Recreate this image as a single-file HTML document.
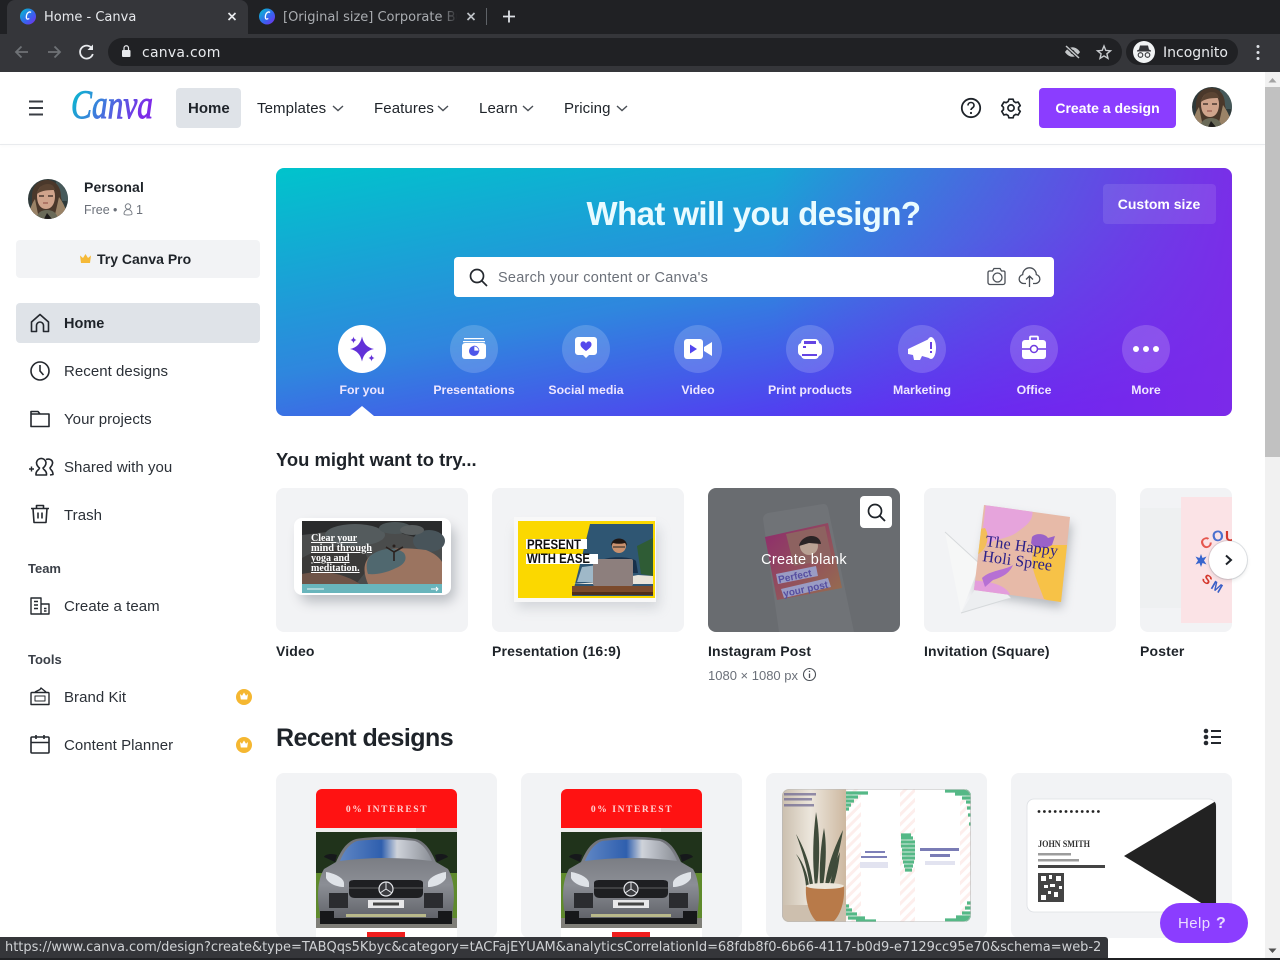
<!DOCTYPE html>
<html lang="en"><head><meta charset="utf-8"><title>Home - Canva</title>
<style>
*{box-sizing:border-box}
html,body{margin:0;padding:0;width:1280px;height:960px;overflow:hidden;background:#fff;font-family:"Liberation Sans",sans-serif;color:#1e2329}
.a{position:absolute}
.t{position:absolute;white-space:nowrap;line-height:20px;height:20px;margin-top:1px}
.b{font-weight:700}
.c{transform:translateX(-50%)}
svg{position:absolute;overflow:visible;display:block}
.chrome{font-family:"DejaVu Sans","Liberation Sans",sans-serif}
.nav{font-size:15px;color:#1e2329;letter-spacing:.1px}
.side{font-size:15px;color:#2b3037;letter-spacing:.05px}
.lab{font-size:13px;font-weight:700;color:#3b4048}
.cap{font-size:14px;font-weight:700;color:#1e2329;letter-spacing:.15px}
.hl{font-size:12.3px;font-weight:700;color:#eee6ff;top:379px}
.hc{position:absolute;width:48px;height:48px;border-radius:50%;background:rgba(255,255,255,.17);top:325px}
.card{position:absolute;top:488px;height:144px;width:192px;background:#f2f3f5;border-radius:8px;overflow:hidden}
.rc{position:absolute;top:773px;height:165px;width:221px;background:#f2f3f5;border-radius:8px;overflow:hidden}
</style></head><body>

<!-- browser chrome -->
<div class="a" style="left:0;top:0;width:1280px;height:34px;background:#202124"></div>
<div class="a" style="left:0;top:34px;width:1280px;height:38px;background:#35363a"></div>
<div class="a" style="left:7px;top:0;width:241px;height:34px;background:#35363a;border-radius:8px 8px 0 0"></div>
<svg style="left:0;top:0" width="1280" height="72" viewBox="0 0 1280 72">
 <defs><linearGradient id="fav" x1="0" y1="0" x2="1" y2="1"><stop offset="0" stop-color="#00c4cc"/><stop offset=".6" stop-color="#3b5ff0"/><stop offset="1" stop-color="#7d2ae8"/></linearGradient></defs>
 <circle cx="28" cy="16.500" r="8" fill="url(#fav)"/><path d="M31 12.500c-1.200-1.200-3.800-.4-4.500 3-.6 3 .4 4.500 2.800 3" fill="none" stroke="#fff" stroke-width="1.300"/>
 <circle cx="267" cy="16.500" r="8" fill="url(#fav)"/><path d="M270 12.500c-1.200-1.200-3.800-.4-4.500 3-.6 3 .4 4.500 2.800 3" fill="none" stroke="#fff" stroke-width="1.300"/>
 <path d="M228.500 13l7 7M235.500 13l-7 7" stroke="#e8eaed" stroke-width="1.700"/>
 <path d="M467.500 13l7 7M474.500 13l-7 7" stroke="#bdc1c6" stroke-width="1.700"/>
 <path d="M486.500 8v17" stroke="#5f6368" stroke-width="1"/>
 <path d="M509 10.500v12M503 16.500h12" stroke="#dee1e6" stroke-width="1.800"/>
 <path d="M28 52H16M21.500 46.500L16 52l5.500 5.500" fill="none" stroke="#6f7276" stroke-width="1.800"/>
 <path d="M48 52h12M54.500 46.500L60 52l-5.500 5.500" fill="none" stroke="#6f7276" stroke-width="1.800"/>
 <path d="M92 48.500A6.500 6.500 0 1 0 92.800 54" fill="none" stroke="#e8eaed" stroke-width="1.800"/><path d="M93 44.500v5.500h-5.500z" fill="#e8eaed"/>
 <rect x="108" y="38" width="1014" height="28" rx="14" fill="#202124"/>
 <rect x="122" y="50" width="8.500" height="7" rx="1" fill="#e8eaed"/><path d="M124 50v-2a2.200 2.200 0 0 1 4.500 0v2" fill="none" stroke="#e8eaed" stroke-width="1.200"/>
 <path d="M1065 52s2.800-4.800 7.500-4.800 7.500 4.800 7.500 4.800-2.800 4.800-7.500 4.800-7.500-4.800-7.500-4.800z" fill="#c4c7c9"/><circle cx="1072.500" cy="52" r="2" fill="#202124"/><path d="M1066 46l13 12" stroke="#202124" stroke-width="3.500"/><path d="M1066 46l13 12" stroke="#c4c7c9" stroke-width="1.500"/>
 <path d="M1104 46l1.800 4.400 4.700.4-3.600 3 1.100 4.600-4-2.500-4 2.500 1.100-4.600-3.600-3 4.700-.4z" fill="none" stroke="#c8cbce" stroke-width="1.400"/>
 <rect x="1126" y="39" width="112" height="26" rx="13" fill="#202124"/>
 <circle cx="1144" cy="52" r="11" fill="#f1f3f4"/><path d="M1137 51.500h14v-1l-2-1-1-4h-8l-1 4-2 1z" fill="#35363a"/><circle cx="1140.500" cy="55" r="2.300" fill="none" stroke="#35363a" stroke-width="1.100"/><circle cx="1147.500" cy="55" r="2.300" fill="none" stroke="#35363a" stroke-width="1.100"/>
 <circle cx="1258" cy="46.500" r="1.500" fill="#dee1e6"/><circle cx="1258" cy="52.500" r="1.500" fill="#dee1e6"/><circle cx="1258" cy="58.500" r="1.500" fill="#dee1e6"/>
</svg>
<div class="t chrome" style="left:44px;top:7px;font-size:13px;color:#e8eaed">Home - Canva</div>
<div class="a" style="left:283px;top:7px;width:174px;height:21px;overflow:hidden"><div class="t chrome" style="left:0;top:0;font-size:13px;color:#a9acb0">[Original size] Corporate Business</div></div>
<div class="a" style="left:440px;top:4px;width:18px;height:24px;background:linear-gradient(90deg,rgba(32,33,36,0),#202124)"></div>
<div class="t chrome" style="left:142px;top:42px;font-size:14px;letter-spacing:.25px;color:#e8eaed">canva.com</div>
<div class="t chrome" style="left:1163px;top:42px;font-size:14px;color:#e8eaed">Incognito</div>

<!-- top header -->
<div class="a" style="left:0;top:144px;width:1265px;height:1px;background:#e9ebee;box-shadow:0 1px 2px rgba(0,0,0,.04)"></div>
<svg style="left:0;top:72px" width="260" height="72" viewBox="0 0 260 72">
 <defs><linearGradient id="logo" x1="0" y1="0" x2="1" y2=".3"><stop offset="0" stop-color="#00c4cc"/><stop offset=".45" stop-color="#3b7fdc"/><stop offset="1" stop-color="#7d2ae8"/></linearGradient></defs>
 <path d="M29 29.500h14M29 36h14M29 42.500h14" stroke="#3a3e44" stroke-width="2"/>
 <text x="71" y="46" font-family="Liberation Serif" font-style="italic" font-size="40" textLength="82" lengthAdjust="spacingAndGlyphs" fill="url(#logo)" stroke="url(#logo)" stroke-width=".9">Canva</text>
</svg>
<div class="a" style="left:176px;top:88px;width:65px;height:40px;background:#dfe3e8;border-radius:4px"></div>
<div class="t b" style="left:188px;top:98px;font-size:15px;color:#1e2329">Home</div>
<div class="t nav" style="left:257px;top:98px">Templates</div>
<div class="t nav" style="left:374px;top:98px">Features</div>
<div class="t nav" style="left:479px;top:98px">Learn</div>
<div class="t nav" style="left:564px;top:98px">Pricing</div>
<svg style="left:0;top:100px" width="640" height="16" viewBox="0 0 640 16" fill="none" stroke="#4a4f56" stroke-width="1.400">
 <path d="M333 6l5 4.500L343 6M438 6l5 4.500L448 6M523 6l5 4.500L533 6M617 6l5 4.500L627 6"/>
</svg>
<svg style="left:950px;top:88px" width="80" height="40" viewBox="0 0 80 40" fill="none" stroke="#1e2329" stroke-width="1.800">
 <circle cx="21" cy="20" r="9.200"/><path d="M18 17.500c0-4 6-4 6 0 0 2.500-3 2.300-3 4.500" stroke-width="1.600"/><circle cx="21" cy="25" r=".6" fill="#1e2329" stroke-width="1"/>
 <g transform="translate(61 20) scale(.84) translate(-61 -20)"><circle cx="61" cy="20" r="3.700" stroke-width="2"/><path d="M58.500 9.500h5l.8 2.700 2.400 1.400 2.800-.7 2.500 4.300-2 2v2.800l2 2-2.500 4.300-2.800-.7-2.400 1.400-.8 2.700h-5l-.8-2.700-2.400-1.400-2.800.7-2.500-4.300 2-2v-2.800l-2-2 2.500-4.300 2.800.7 2.400-1.400z" stroke-linejoin="round" stroke-width="2"/></g>
</svg>
<div class="a" style="left:1039px;top:88px;width:137px;height:40px;background:#8b3dff;border-radius:4px"></div>
<div class="t b c" style="left:1107.500px;top:97px;font-size:14px;color:#fff">Create a design</div>
<svg style="left:1192px;top:87px" width="40" height="40" viewBox="0 0 40 40"><use href="#ava"/></svg>

<!-- avatar -->
<svg style="left:28px;top:179px" width="40" height="40" viewBox="0 0 40 40">
 <defs><clipPath id="avc"><circle cx="20" cy="20" r="20"/></clipPath>
 <g id="ava" clip-path="url(#avc)">
  <rect width="40" height="40" fill="#2f3a3a"/><rect x="28" width="12" height="22" fill="#46595a"/>
  <path d="M4 40V18C4 5 12 1 19 1s14 5 14 17l5 22z" fill="#4a382b"/>
  <path d="M1 40c0-8 2-14 6-20l4 20zM39 40c0-9-3-15-8-22l-5 22z" fill="#9a8367"/>
  <path d="M9 17C9 10 13 6 18 6s9 4 9 11-3 13-9 13-9-6-9-13z" fill="#d0a48c"/>
  <path d="M9 15c1-6 5-10 11-10 4 0 6 2 7 6-6 0-13 0-18 4z" fill="#5b4433"/>
  <path d="M11 17h5M20 17h5" stroke="#30241f" stroke-width="1.300"/><path d="M15 24h5" stroke="#9b5a50" stroke-width="1.300"/>
  <path d="M8 40c1-6 5-9 11-9s10 3 11 9z" fill="#6a6a58"/><path d="M16 40l3-6 5 6z" fill="#1d1b1a"/>
 </g></defs>
 <use href="#ava"/>
</svg>

<!-- sidebar -->
<div class="t b" style="left:84px;top:176px;font-size:14px;color:#1e2329;letter-spacing:.1px">Personal</div>
<div class="t" style="left:84px;top:199px;font-size:12.500px;color:#6b7079">Free</div>
<div class="t" style="left:113px;top:199px;font-size:12.500px;color:#6b7079">•</div>
<div class="t" style="left:136px;top:199px;font-size:12.500px;color:#6b7079">1</div>
<svg style="left:122px;top:203px" width="12" height="13" viewBox="0 0 12 13" fill="none" stroke="#7b8088"><circle cx="6" cy="3.500" r="2.700"/><path d="M2 11c0-6 8-6 8 0-.5 1.300-7.500 1.300-8 0z"/></svg>
<div class="a" style="left:16px;top:240px;width:244px;height:38px;background:#f2f3f5;border-radius:4px"></div>
<svg style="left:79px;top:253px" width="13" height="12" viewBox="0 0 13 12"><path d="M1 2.500l3 2.500L6.500 1 9 5l3-2.500L11 10H2z" fill="#f5b937"/></svg>
<div class="t b" style="left:97px;top:248px;font-size:14px;color:#1e2329">Try Canva Pro</div>
<div class="a" style="left:16px;top:303px;width:244px;height:40px;background:#dfe3e8;border-radius:4px"></div>
<div class="t b" style="left:64px;top:313px;font-size:14.500px">Home</div>
<div class="t side" style="left:64px;top:361px">Recent designs</div>
<div class="t side" style="left:64px;top:409px">Your projects</div>
<div class="t side" style="left:64px;top:457px">Shared with you</div>
<div class="t side" style="left:64px;top:505px">Trash</div>
<div class="t lab" style="left:28px;top:558px">Team</div>
<div class="t side" style="left:64px;top:596px">Create a team</div>
<div class="t lab" style="left:28px;top:649px">Tools</div>
<div class="t side" style="left:64px;top:687px">Brand Kit</div>
<div class="t side" style="left:64px;top:735px">Content Planner</div>
<svg style="left:0;top:300px" width="270" height="470" viewBox="0 300 270 470" fill="none" stroke="#24282e" stroke-width="1.600" stroke-linejoin="round">
 <path d="M31.500 331.500v-9.500l8.500-7.500 8.500 7.500v9.500h-5v-6a3.500 3.500 0 0 0-7 0v6z"/>
 <circle cx="40" cy="371" r="9"/><path d="M40 365v6l3.500 4"/>
 <path d="M31 426.500v-15h7l2 2.500h9v12.500zM31 414h9"/>
 <path d="M29 469h5M31.500 466.500v5" stroke-width="1.400"/><path d="M36 475c-.5-5 3.500-5 3.500-7-2-1.500-3-3-3-5.500a4.800 4.800 0 0 1 9.500 0c0 2.500-1 4-3 5.500 0 2 4 2 3.500 7z"/><path d="M46 459.500c4-1.500 7 1 6.500 4-.3 2-1.500 3-2.500 4.500 0 2 3 2 3 6.500l-3 .5"/>
 <path d="M31 508.500h18M36.500 508v-2.500h7v2.500M33 508.500l1 14h12l1-14M38 512.500v6M42 512.500v6"/>
 <path d="M31 598h10v16H31zM41 604h8v10h-8M34 601.500h4M34 605h4M34 608.500h4M44 608.500h2.500M44 611h2.500" stroke-width="1.400"/>
 <path d="M32 692.500h16a1 1 0 0 1 1 1v11H31v-11a1 1 0 0 1 1-1zM35 692l5-2.500 1-1.500 5 4" stroke-width="1.400"/><rect x="35" y="696" width="10" height="5" stroke-width="1"/>
 <rect x="31" y="737" width="18" height="16" rx="1"/><path d="M31 742.500h18M36 735v4M44 735v4"/>
 <g stroke="none"><circle cx="244" cy="697" r="8" fill="#f5b731"/><circle cx="244" cy="745" r="8" fill="#f5b731"/>
 <path d="M240 694l2 1.800L244 692.500l2 3.300 2-1.800-.8 5.500h-6.400z" fill="#fff"/><path d="M240 742l2 1.800L244 740.500l2 3.300 2-1.800-.8 5.500h-6.400z" fill="#fff"/></g>
</svg>

<!-- hero -->
<div class="a" style="left:276px;top:168px;width:956px;height:248px;border-radius:8px;background:linear-gradient(90deg,rgba(125,42,232,0) 52%,rgba(125,42,232,.95) 100%),linear-gradient(169deg,#00c4cc 0%,#2f86de 48%,#5f22f8 92%)"></div>
<div class="t b c" style="left:753.500px;top:193px;height:40px;line-height:40px;font-size:33px;color:#e9fbff;letter-spacing:-.6px">What will you design?</div>
<div class="a" style="left:1103px;top:184px;width:113px;height:40px;background:rgba(255,255,255,.1);border-radius:4px"></div>
<div class="t b c" style="left:1159px;top:193px;font-size:14px;color:#fff">Custom size</div>
<div class="a" style="left:454px;top:257px;width:600px;height:40px;background:#fff;border-radius:4px"></div>
<div class="t" style="left:498px;top:267px;font-size:14.500px;color:#6b7079;letter-spacing:.25px">Search your content or Canva's</div>
<svg style="left:454px;top:257px" width="600" height="40" viewBox="0 0 600 40" fill="none" stroke="#24282e" stroke-width="1.700">
 <circle cx="23" cy="19" r="6.500"/><path d="M28 24l5 5"/>
 <g stroke="#4a4f56" stroke-width="1.300"><path d="M534 15.500c0-1 .8-1.500 1.500-1.500h3l1.500-2.500h6l1.500 2.500h2c1 0 1.500.7 1.500 1.500v10c0 1-.7 2-2 2h-13c-1 0-2-1-2-2z"/><circle cx="543.500" cy="20.500" r="4.500"/>
 <path d="M572 26.500h-2.500a4.500 4.500 0 0 1-.8-8.900 6.800 6.800 0 0 1 13.600 0 4.500 4.500 0 0 1-.8 8.900H579M575.500 30v-11M572 22.500l3.500-3.500 3.500 3.500"/></g>
</svg>
<div class="hc" style="left:338px;background:#fff"></div>
<div class="hc" style="left:450px"></div><div class="hc" style="left:562px"></div><div class="hc" style="left:674px"></div><div class="hc" style="left:786px"></div><div class="hc" style="left:898px"></div><div class="hc" style="left:1010px"></div><div class="hc" style="left:1122px"></div>
<svg style="left:276px;top:320px" width="956" height="96" viewBox="276 320 956 96" fill="#fff">
 <path d="M362 336.500c1.500 7 5 11 12 12.500-7 1.500-10.500 5.500-12 12.500-1.500-7-5-11-12-12.500 7-1.500 10.500-5.500 12-12.500z" fill="#6231d8"/><path d="M353.500 336.500c.4 2 1.200 3 3 3.500-1.800.5-2.600 1.500-3 3.500-.4-2-1.200-3-3-3.500 1.800-.5 2.600-1.500 3-3.500zM371.500 354.500c.4 2 1.200 3 3 3.500-1.800.5-2.600 1.500-3 3.500-.4-2-1.200-3-3-3.500 1.800-.5 2.600-1.500 3-3.500z" fill="#6231d8"/>
 <path d="M463 341h22v1.200h-22zM464 338h20v1.200h-20z"/><rect x="462" y="343" width="24" height="16" rx="3"/><circle cx="474" cy="351" r="5" fill="#4d56ea"/><path d="M474 346v5h5a5 5 0 0 0-5-5z" fill="#fff" stroke="#4d56ea" stroke-width=".7"/>
 <path d="M578 337h16a3 3 0 0 1 3 3v12a3 3 0 0 1-3 3h-5l-3 3-3-3h-5a3 3 0 0 1-3-3v-12a3 3 0 0 1 3-3z"/><path d="M586 351c-4-3-5.500-4.500-5.500-6.500a2.800 2.800 0 0 1 5.500-1 2.800 2.800 0 0 1 5.500 1c0 2-1.500 3.500-5.500 6.500z" fill="#5549ec"/>
 <rect x="684" y="339" width="19" height="20" rx="3"/><path d="M704 347l8-5v14l-8-5z"/><path d="M690 344.500l7 4.500-7 4.500z" fill="#5245ee"/>
 <rect x="801" y="339" width="18" height="20" rx="4"/><rect x="798" y="343" width="24" height="13" rx="4"/><path d="M804 341h12v3h-12zM802 354h15v2h-15z" fill="#6444e3"/><rect x="803" y="346" width="3" height="2" fill="#6444e3"/>
 <path d="M908 349l21-10v19l-7-2-2 4h-6l-1-5-5-1z"/><ellipse cx="931" cy="348" rx="5" ry="11"/><path d="M931 342v7M931 351v2" stroke="#6a3fe2" stroke-width="2"/>
 <path d="M1030 340v-2.500c0-.8.5-1 1-1h6c.5 0 1 .2 1 1v2.500" fill="none" stroke="#fff" stroke-width="1.800"/><rect x="1022" y="340" width="24" height="19" rx="3"/><path d="M1022 349h8M1038 349h8" stroke="#6f3be0" stroke-width="1.500"/><circle cx="1034" cy="349" r="3.500" fill="#fff" stroke="#6f3be0" stroke-width="1.500"/>
 <circle cx="1136" cy="349" r="3"/><circle cx="1146" cy="349" r="3"/><circle cx="1156" cy="349" r="3"/>
 <path d="M350 416l12-10 12 10z"/>
</svg>
<div class="t b c hl" style="left:362px">For you</div>
<div class="t b c hl" style="left:474px">Presentations</div>
<div class="t b c hl" style="left:586px">Social media</div>
<div class="t b c hl" style="left:698px">Video</div>
<div class="t b c hl" style="left:810px">Print products</div>
<div class="t b c hl" style="left:922px">Marketing</div>
<div class="t b c hl" style="left:1034px">Office</div>
<div class="t b c hl" style="left:1146px">More</div>

<!-- try section -->
<div class="t b" style="left:276px;top:449px;font-size:18.400px;color:#1e2329">You might want to try...</div>

<div class="card" style="left:276px">
 <svg style="left:0;top:0" width="192" height="144" viewBox="276 488 192 144">
  <defs><filter id="s1" x="-20%" y="-30%" width="140%" height="170%"><feGaussianBlur stdDeviation="6"/></filter></defs>
  <rect x="300" y="526" width="155" height="76" rx="10" fill="#777d85" opacity=".45" filter="url(#s1)"/>
  <rect x="294" y="518" width="157" height="77" rx="8" fill="#fff"/>
  <rect x="302" y="521" width="140" height="63" fill="#4a4c4c"/>
  <path d="M302 521h140v14l-20 4-30-8-40-2-50 6z" fill="#2a2b2c"/>
  <ellipse cx="355" cy="535" rx="30" ry="11" fill="#545b5d"/><ellipse cx="395" cy="528" rx="16" ry="6" fill="#4d5658"/><ellipse cx="429" cy="541" rx="16" ry="11" fill="#48545a"/><ellipse cx="412" cy="530" rx="12" ry="5" fill="#5a5f60"/>
  <path d="M302 558c20-12 45-14 60-8 8 6 6 16 2 24l-8 10h-54z" fill="#3b3a39"/>
  <path d="M368 584c-4-10-6-20 2-28 14-10 40-8 56-6 8 3 14 8 16 12v22z" fill="#9b7460"/>
  <path d="M370 556c10-8 26-10 34-3 4 6 0 12-8 15-8 4-18 7-28 6-2-6-2-13 2-18z" fill="#50686f"/>
  <path d="M394 552l-8-5M394 552l9-5M394 552v9" stroke="#2a211e" stroke-width="1.600"/><circle cx="394" cy="546" r="1.500" fill="#2a211e"/>
  <path d="M302 574c18-4 40-2 58 10H302z" fill="#6f5448"/>
  <rect x="302" y="584" width="140" height="9" fill="#69b5bc"/><path d="M431 589h7M436 587l2 2-2 2" stroke="#fff" fill="none"/><rect x="307" y="588" width="17" height="2" fill="#a8d4d8"/>
  <g font-family="Liberation Serif" font-weight="700" font-size="10" fill="#fff" text-decoration="underline"><text x="311" y="541">Clear your</text><text x="311" y="551" textLength="61" lengthAdjust="spacingAndGlyphs">mind through</text><text x="311" y="561">yoga and</text><text x="311" y="571">meditation.</text></g>
 </svg>
</div>
<div class="card" style="left:492px">
 <svg style="left:0;top:0" width="192" height="144" viewBox="492 488 192 144">
  <rect x="517" y="528" width="142" height="80" fill="#9aa0a8" opacity=".35" filter="url(#s1)"/>
  <rect x="514" y="517" width="142" height="85" fill="#f8f8f8"/>
  <rect x="518" y="521" width="137" height="77" fill="#fbd800"/>
  <path d="M590 524h63v72h-81z" fill="#2f5673"/>
  <path d="M577 582l5-15 16-2v17z" fill="#9fb8c8"/>
  <path d="M637 546l16-8v38l-12-2z" fill="#2f5c35"/>
  <path d="M572 584h81v-8l-15-1-40 7z" fill="#e9e4da"/>
  <rect x="572" y="586" width="81" height="9" fill="#7b4a2c"/><rect x="572" y="592" width="81" height="3" fill="#4f2e1a"/>
  <path d="M601 561c4-5 31-5 35 0l2 12h-37z" fill="#18304a"/><circle cx="619" cy="546" r="7" fill="#c9916e"/><path d="M611 546c0-10 16-10 16 0l-2-3c-4 1-8 1-12 0z" fill="#201714"/><path d="M613 547h12" stroke="#222" stroke-width="1"/>
  <rect x="593" y="559" width="40" height="27" rx="2" fill="#8d7f7d"/>
  <rect x="526" y="539" width="61" height="10" fill="#fff"/><rect x="526" y="554" width="72" height="10" fill="#fff"/>
  <g font-family="Liberation Sans" font-weight="700" font-size="14" fill="#111"><text x="527" y="549" textLength="54" lengthAdjust="spacingAndGlyphs">PRESENT</text><text x="527" y="563" textLength="63" lengthAdjust="spacingAndGlyphs">WITH EASE</text></g>
 </svg>
</div>
<div class="card" style="left:708px;background:#696c70">
 <svg style="left:0;top:0" width="192" height="144" viewBox="708 488 192 144">
  <path d="M763 519c0-3 2-5 5-6l55-9c3 0 4 1 5 4l26 124h-75z" fill="#707377"/>
  <defs><linearGradient id="ig" x1="0" y1="0" x2="1" y2="1"><stop offset="0" stop-color="#8e2a6d"/><stop offset="1" stop-color="#96704e"/></linearGradient></defs>
  <path d="M765 537l63-14 14 65-65 12z" fill="url(#ig)"/>
  <path d="M786 534l39-8 7 33-38 7z" fill="#8d6260"/><circle cx="809" cy="546" r="9" fill="#b9a294"/><path d="M799 546c2-12 21-14 22-2l-12-1z" fill="#2a2426"/>
  <path d="M776 574l40-8 2 10-40 8zM781 589l47-11 3 9-47 11z" fill="#9a9cc4"/>
  <g font-family="Liberation Sans" font-weight="700" font-size="10" fill="#564ea0"><text transform="translate(779 583) rotate(-12)">Perfect</text><text transform="translate(784 597) rotate(-12)">your post</text></g>
  <rect x="860" y="496" width="32" height="32" rx="4" fill="#fff"/><circle cx="875" cy="511" r="6.500" fill="none" stroke="#1e2329" stroke-width="1.700"/><path d="M880 516l5 5" stroke="#1e2329" stroke-width="1.900"/>
 </svg>
 <div class="t c" style="left:96px;top:61px;font-size:14.500px;color:#fff;letter-spacing:.3px">Create blank</div>
</div>
<div class="card" style="left:924px">
 <svg style="left:0;top:0" width="192" height="144" viewBox="924 488 192 144">
  <defs><filter id="s2"><feGaussianBlur stdDeviation="5"/></filter><clipPath id="ic"><path d="M984 505l86 12-9 85-87-12z"/></clipPath></defs>
  <path d="M990 512l82 12-10 84-88-14z" fill="#7d828a" opacity=".5" filter="url(#s2)"/>
  <path d="M945 532l40 40-24 41 50-15z" fill="#eceef0"/><path d="M945 532l35 32-19 49z" fill="#f6f7f7"/><path d="M945 532l35 32M961 613l50-15" stroke="#d6d9db" fill="none"/>
  <g clip-path="url(#ic)"><rect x="970" y="500" width="105" height="105" fill="#e7baa8"/>
   <path d="M984 505l48 4c3 12-8 18-16 24-12 8-30 5-36 20l6-50z" fill="#e6a4dc"/>
   <path d="M975 530l10-2c5 8 3 22-10 28z" fill="#f4c14c" opacity=".9"/>
   <path d="M1040 545c10 0 30 0 30 0l-8 60-18-6c-5-14-12-28-12-38 0-8 2-15 8-16z" fill="#f7c247"/>
   <path d="M972 580c14 2 30 2 38 14l-6 6-30-6z" fill="#e39ddc"/></g>
  <path d="M1032 537c3-4 13-4 16 1l7-2-3 9c-6 4-18 4-21-2z" fill="#9a62c8"/>
  <path d="M982 578c8-8 24-8 31-13-4 10-14 13-20 15l-8 7z" fill="#b670d4"/>
  <g font-family="Liberation Serif" font-size="16" fill="#2b2089"><text transform="translate(985 546) rotate(8)" textLength="73">The Happy</text><text transform="translate(982 561) rotate(8)" textLength="70">Holi Spree</text></g>
 </svg>
</div>
<div class="card" style="left:1140px;width:92px">
 <svg style="left:0;top:0" width="92" height="144" viewBox="1140 488 92 144">
  <rect x="1140" y="508" width="41" height="100" fill="#eef0f1"/>
  <rect x="1181" y="497" width="51" height="126" fill="#fbe3e6"/>
  <g font-family="Liberation Sans" font-weight="700" font-size="15"><text transform="translate(1204 550) rotate(-30)" fill="#e5574f">C</text><text transform="translate(1213 542) rotate(-10)" fill="#4a6fce">O</text><text transform="translate(1225 541)" fill="#d4372c">U</text>
  <text transform="translate(1201 580) rotate(40)" fill="#d4372c" font-size="13">S</text><text transform="translate(1210 588) rotate(30)" fill="#3a5fc6" font-size="13">M</text></g>
  <path d="M1201 554l1.500 4 4-1.500-2.500 4 2.500 4-4-1.500-1.500 4-1.500-4-4 1.500 2.500-4-2.500-4 4 1.500z" fill="#3865cd"/>
 </svg>
</div>
<div class="a" style="left:1209px;top:541px;width:38px;height:38px;border-radius:50%;background:#fff;box-shadow:0 0 0 1px rgba(57,76,96,.15),0 2px 4px rgba(0,0,0,.1)"></div>
<svg style="left:1209px;top:541px" width="38" height="38" viewBox="0 0 38 38"><path d="M17 14.500l5 4.500-5 4.500" fill="none" stroke="#1e2329" stroke-width="2"/></svg>

<div class="t cap" style="left:276px;top:640px">Video</div>
<div class="t cap" style="left:492px;top:640px">Presentation (16:9)</div>
<div class="t cap" style="left:708px;top:640px">Instagram Post</div>
<div class="t cap" style="left:924px;top:640px">Invitation (Square)</div>
<div class="t cap" style="left:1140px;top:640px">Poster</div>
<div class="t" style="left:708px;top:665px;font-size:13px;color:#6b7079">1080 × 1080 px</div>
<svg style="left:802px;top:667px" width="15" height="15" viewBox="0 0 15 15" fill="none" stroke="#4a4f56" stroke-width="1.100"><circle cx="7.500" cy="7.500" r="6"/><path d="M7.500 6.500v4.500M7.500 3.800v1.200" stroke-width="1.300"/></svg>

<!-- recent designs -->
<div class="t b" style="left:276px;top:722px;height:30px;line-height:30px;font-size:25px;color:#1e2329;letter-spacing:-.55px">Recent designs</div>
<svg style="left:1200px;top:725px" width="24" height="24" viewBox="0 0 24 24" fill="#24282e"><circle cx="6" cy="6" r="2.300"/><circle cx="6" cy="12" r="2.300"/><circle cx="6" cy="18" r="2.300"/><rect x="11" y="5" width="10" height="2"/><rect x="11" y="11" width="10" height="2"/><rect x="11" y="17" width="10" height="2"/></svg>

<svg style="left:0;top:0" width="0" height="0"><defs>
 <linearGradient id="cb" x1="0" y1="0" x2="0" y2="1"><stop offset="0" stop-color="#6e7076"/><stop offset=".55" stop-color="#8b8e95"/><stop offset="1" stop-color="#5a5c62"/></linearGradient>
 <linearGradient id="gl" x1="0" y1="0" x2="1" y2="0"><stop offset="0" stop-color="#5f86c4"/><stop offset=".45" stop-color="#2f5fae"/><stop offset=".62" stop-color="#cfd3da"/><stop offset="1" stop-color="#8a8e96"/></linearGradient>
 <g id="car">
  <path d="M0 39V6a6 6 0 0 1 6-6h129a6 6 0 0 1 6 6v33z" fill="#ff1212"/>
  <rect y="39" width="141" height="4" fill="#eee"/><rect x="100" y="39" width="41" height="4" fill="#d8d8d8"/>
  <rect y="43" width="141" height="96" fill="#20331b"/>
  <rect y="84" width="141" height="46" fill="#5f8a2c"/>
  <rect y="129" width="141" height="10" fill="#7f7e78"/>
  <path d="M3 120C1 105 2 90 8 80l12-7c5-11 10-20 20-23 18-3 44-3 60 0 10 3 15 12 20 23l12 7c6 10 7 25 5 40l-1 12c-1 3-6 3-11 3H16c-6 0-10 0-11-3z" fill="url(#cb)"/>
  <path d="M24 72c4-10 9-17 17-20 17-2 43-2 58 0 8 3 13 10 17 20-31-4-61-4-92 0z" fill="url(#gl)"/>
  <path d="M33 94c0-2 2-3 6-3h62c4 0 6 1 6 3v10c0 3-2 5-6 5H39c-4 0-6-2-6-5z" fill="#1e1f22"/>
  <path d="M33 99h74" stroke="#777" stroke-width=".8"/>
  <path d="M10 83c8 1 18 6 18 11v4c-8 0-16-4-18-9zM130 83c-8 1-18 6-18 11v4c8 0 16-4 18-9z" fill="#dfe3e8"/>
  <circle cx="70" cy="100" r="7" fill="#3a3b3f" stroke="#e4e6ea" stroke-width="1.200"/><path d="M70 93v7l-6 4M70 100l6 4" stroke="#e4e6ea" fill="none"/>
  <rect x="52" y="111" width="36" height="8" fill="#e8e8ea"/><rect x="57" y="113.500" width="26" height="3" fill="#444"/>
  <path d="M13 104h19v15H13zM108 104h19v15h-19z" fill="#2b2c30"/><path d="M30 125h80v3H30z" fill="#b9b98a"/>
  <path d="M4 122h14v13H4zM122 122h14v13h-14zM18 129h104v6H18z" fill="#17181a"/>
  <path d="M8 68c1-3 8-4 13-2l-2 7zM132 68c-1-3-8-4-13-2l2 7z" fill="#16181b"/>
  <rect y="139" width="141" height="10" fill="#fff"/><rect x="51" y="143" width="38" height="6" fill="#f01e1e"/>
 </g>
</defs></svg>
<div class="rc" style="left:276px"><svg style="left:40px;top:16px" width="141" height="149" viewBox="0 0 141 149"><use href="#car"/></svg>
 <div class="t c" style="left:111px;top:26px;font:700 9.500px/20px 'Liberation Serif',serif;letter-spacing:1.600px;color:#ffd2d2">0% INTEREST</div></div>
<div class="rc" style="left:521px"><svg style="left:40px;top:16px" width="141" height="149" viewBox="0 0 141 149"><use href="#car"/></svg>
 <div class="t c" style="left:111px;top:26px;font:700 9.500px/20px 'Liberation Serif',serif;letter-spacing:1.600px;color:#ffd2d2">0% INTEREST</div></div>
<div class="rc" style="left:766px">
 <svg style="left:0;top:0" width="221" height="165" viewBox="766 773 221 165">
  <defs><clipPath id="br"><rect x="782" y="789" width="189" height="133" rx="7"/></clipPath>
  <pattern id="st" width="7" height="7" patternUnits="userSpaceOnUse" patternTransform="rotate(45)"><rect width="7" height="7" fill="#fff"/><rect width="3" height="7" fill="#fdeeec"/></pattern>
  <linearGradient id="wall" x1="0" y1="0" x2="1" y2="0"><stop offset="0" stop-color="#cbbfae"/><stop offset=".45" stop-color="#ece6dc"/><stop offset="1" stop-color="#cdb8a0"/></linearGradient></defs>
  <g clip-path="url(#br)">
   <rect x="782" y="789" width="189" height="133" fill="#fff"/>
   <rect x="782" y="789" width="64" height="133" fill="url(#wall)"/><rect x="782" y="905" width="64" height="17" fill="#cdbfae"/>
   <rect x="846" y="789" width="15" height="133" fill="url(#st)"/><rect x="900" y="789" width="15" height="133" fill="url(#st)"/><rect x="960" y="789" width="11" height="133" fill="url(#st)"/>
   <g fill="#3f4b3a"><path d="M810 886c-3-20-8-35-14-52 7 12 14 28 17 50z"/><path d="M815 886c-3-25-2-50 1-74 4 20 4 50 1 74z"/><path d="M820 886c-1-22 1-42 4-58 3 16 2 40-1 58z"/><path d="M825 886c2-20 10-40 18-56-3 20-9 42-15 56z"/><path d="M806 886c-1-12-5-24-10-32 6 6 12 20 13 32z"/><path d="M830 886c2-14 5-24 10-34-1 12-4 26-7 34z"/></g>
   <path d="M806 886h38c1 14-3 28-10 35h-18c-7-7-11-21-10-35z" fill="#b87a49"/><ellipse cx="825" cy="886" rx="19" ry="3" fill="#ece6da"/>
   <g stroke="#55b886" stroke-width="3.200" fill="none">
    <path d="M846 793h22M846 797h12M846 801h8M846 805h5M846 809h3"/>
    <path d="M846 906h3M846 910h6M846 914h11M848 918h17M856 921h20"/>
    <path d="M945 791h26M955 794h16M962 798h9M966 802h5M967 808h4M968 815h3M969 824h2"/>
    <path d="M945 920h26M956 917h15M962 913h9M965 908h6M967 903h4"/>
    <path d="M901 835h10M901 838h12M901 842h14M901 846h14M902 850h13M902 854h13M902 858h13M903 862h11M904 866h9M905 870h7"/>
   </g>
   <rect x="784" y="793" width="32" height="2.500" fill="#6a6490" opacity=".7"/><rect x="784" y="798" width="28" height="2.500" fill="#6a6490" opacity=".7"/><rect x="784" y="804" width="30" height="2.500" fill="#6a6490" opacity=".7"/>
   <rect x="865" y="851" width="20" height="2" fill="#7e80b8"/><rect x="861" y="856" width="26" height="2" fill="#7e80b8"/><rect x="860" y="862" width="28" height="6" fill="#e2e3f0"/>
   <rect x="920" y="848" width="39" height="3" fill="#7a7cb5"/><rect x="930" y="854" width="20" height="3" fill="#7a7cb5"/><rect x="925" y="861" width="30" height="4" fill="#e2e3f0"/>
  </g>
  <rect x="782.500" y="789.500" width="188" height="132" rx="7" fill="none" stroke="#b8b8b8" stroke-width=".6"/>
 </svg>
</div>
<div class="rc" style="left:1011px">
 <svg style="left:0;top:0" width="221" height="165" viewBox="1011 773 221 165">
  <defs><clipPath id="bc"><rect x="1027" y="799" width="189" height="113" rx="7"/></clipPath></defs>
  <rect x="1027" y="799" width="189" height="113" rx="7" fill="#fff" stroke="#dcdfe3" stroke-width=".8"/>
  <path d="M1216 801l-92 55 92 56z" fill="#222" clip-path="url(#bc)"/>
  <path d="M1039 811.500h64" stroke="#222" stroke-width="2.800" stroke-linecap="round" stroke-dasharray="0 5.400" fill="none"/>
  <text x="1038" y="847" font-family="Liberation Serif" font-weight="700" font-size="9.500" fill="#333" textLength="52" lengthAdjust="spacingAndGlyphs">JOHN SMITH</text>
  <rect x="1038" y="853" width="33" height="2.500" fill="#9c9c9c"/><rect x="1038" y="859" width="41" height="2.500" fill="#9c9c9c"/><rect x="1038" y="865" width="67" height="3" fill="#444"/>
  <rect x="1038" y="873" width="26" height="29" fill="#444"/><path d="M1041 876h5v5h-5zM1056 876h5v5h-5zM1041 895h5v5h-5zM1049 875h3v4h-3zM1050 884h5v3h-5zM1054 892h4v5h-4zM1044 885h4v3h-4zM1059 886h3v3h-3zM1048 891h3v3h-3z" fill="#fff"/>
 </svg>
</div>

<!-- help -->
<div class="a" style="left:1160px;top:903px;width:88px;height:40px;border-radius:20px;background:#8b3dff"></div>
<div class="t" style="left:1178px;top:913px;font-size:15px;color:#eadcff;letter-spacing:.4px">Help</div>
<div class="t b" style="left:1216px;top:913px;font-size:16px;color:#eadcff">?</div>

<!-- scrollbar -->
<div class="a" style="left:1265px;top:72px;width:15px;height:888px;background:#f1f1f1"></div>
<div class="a" style="left:1265px;top:87px;width:15px;height:370px;background:#c1c1c1"></div>
<svg style="left:1265px;top:72px" width="15" height="888" viewBox="0 0 15 888" fill="#a3a3a3"><path d="M7.500 6l4 4.500h-8z"/><path d="M7.500 881l4-4.500h-8z" fill="#505050"/></svg>

<!-- status bar -->
<div class="a chrome" style="left:0;top:937px;width:1108px;height:21px;background:#35363a;border-radius:0 3px 0 0;color:#cfd1d4;font-size:13px;line-height:22px;letter-spacing:-.03px;padding-left:5px;white-space:nowrap;overflow:hidden">https://www.canva.com/design?create&amp;type=TABQqs5Kbyc&amp;category=tACFajEYUAM&amp;analyticsCorrelationId=68fdb8f0-6b66-4117-b0d9-e7129cc95e70&amp;schema=web-2</div>
<div class="a" style="left:0;top:958px;width:1280px;height:2px;background:#202124"></div>
</body></html>
